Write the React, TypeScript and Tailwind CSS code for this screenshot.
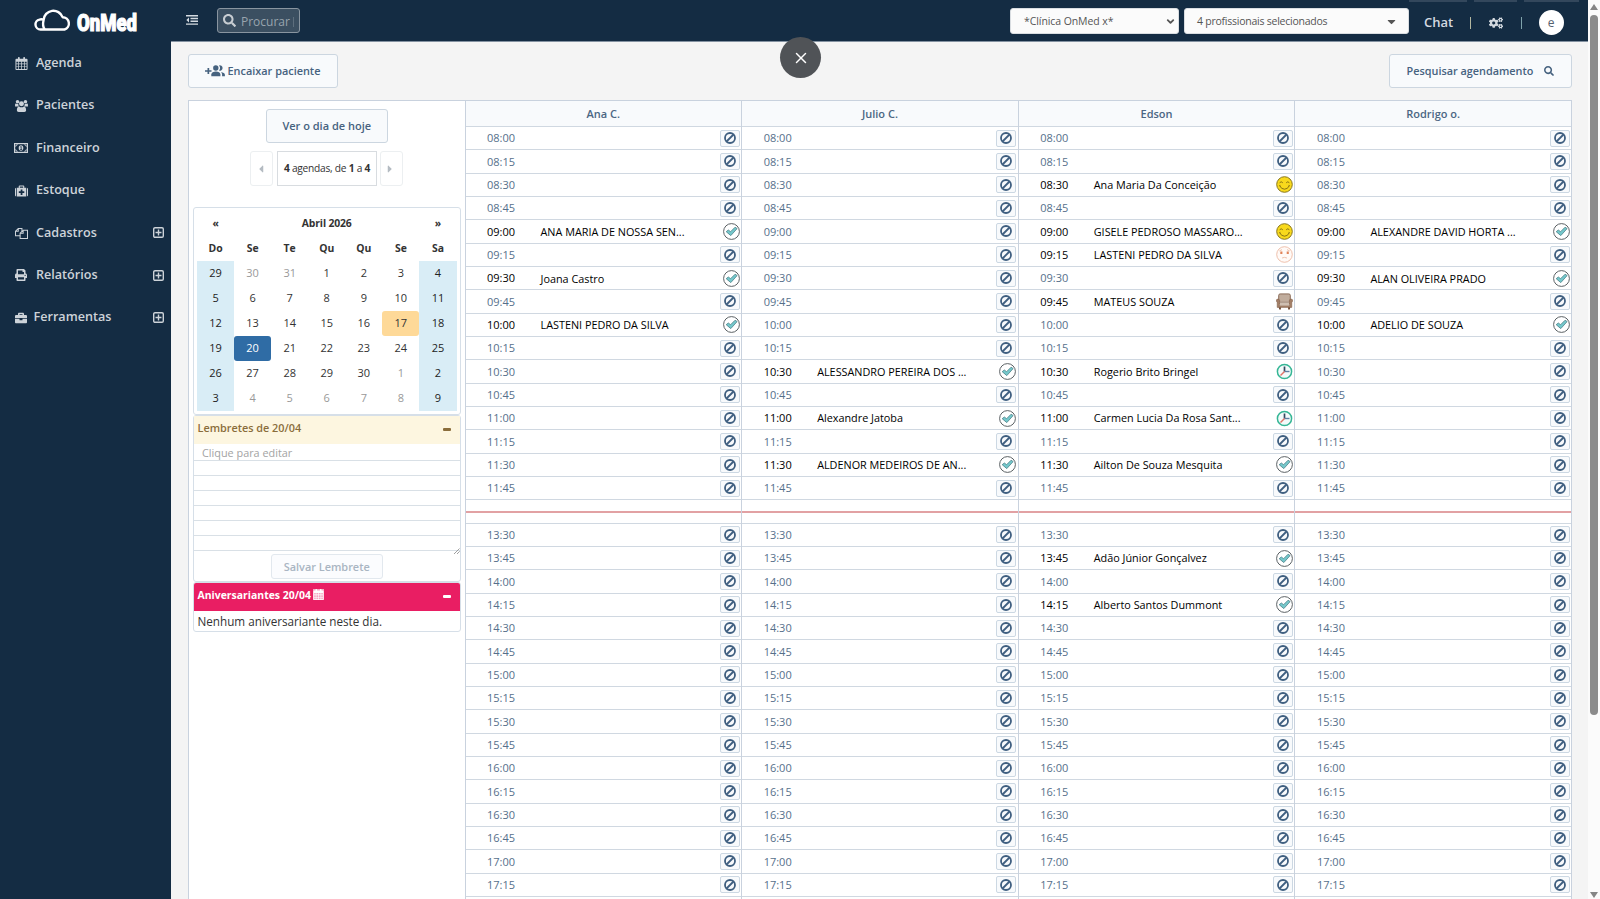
import { ReactNode } from "react"
import { FaPrint, FaBriefcase, FaSearch, FaCogs, FaCaretLeft, FaCaretRight, FaCaretDown } from "react-icons/fa"
import { ChevronDown, X } from "lucide-react"
import clsx from "clsx"

type Status = 'done' | 'happy' | 'sad' | 'chair' | 'clock'

type Booking = {
    name : string;
    status : Status;
}

type Professional = {
    name : string;
    bookings : Record<string, Booking>;
}

const professionals : Professional[] = [
    {
        name: 'Ana C.',
        bookings: {
            '09:00': { name: 'ANA MARIA DE NOSSA SEN...', status: 'done' },
            '09:30': { name: 'Joana Castro', status: 'done' },
            '10:00': { name: 'LASTENI PEDRO DA SILVA', status: 'done' },
        },
    },
    {
        name: 'Julio C.',
        bookings: {
            '10:30': { name: 'ALESSANDRO PEREIRA DOS ...', status: 'done' },
            '11:00': { name: 'Alexandre Jatoba', status: 'done' },
            '11:30': { name: 'ALDENOR MEDEIROS DE AN...', status: 'done' },
        },
    },
    {
        name: 'Edson',
        bookings: {
            '08:30': { name: 'Ana Maria Da Conceição', status: 'happy' },
            '09:00': { name: 'GISELE PEDROSO MASSARO...', status: 'happy' },
            '09:15': { name: 'LASTENI PEDRO DA SILVA', status: 'sad' },
            '09:45': { name: 'MATEUS SOUZA', status: 'chair' },
            '10:30': { name: 'Rogerio Brito Bringel', status: 'clock' },
            '11:00': { name: 'Carmen Lucia Da Rosa Sant...', status: 'clock' },
            '11:30': { name: 'Ailton De Souza Mesquita', status: 'done' },
            '13:45': { name: 'Adão Júnior Gonçalvez', status: 'done' },
            '14:15': { name: 'Alberto Santos Dummont', status: 'done' },
        },
    },
    {
        name: 'Rodrigo o.',
        bookings: {
            '09:00': { name: 'ALEXANDRE DAVID HORTA ...', status: 'done' },
            '09:30': { name: 'ALAN OLIVEIRA PRADO', status: 'done' },
            '10:00': { name: 'ADELIO DE SOUZA', status: 'done' },
        },
    },
]

// quarter-hour slots between two times, in minutes
const slots = (from : number, to : number) => {
    const list : string[] = []
    for (let m = from; m <= to; m += 15) {
        list.push(`${String(Math.floor(m / 60)).padStart(2, '0')}:${String(m % 60).padStart(2, '0')}`)
    }
    return list
}

const morning = slots(8 * 60, 11 * 60 + 45)
const afternoon = slots(13 * 60 + 30, 17 * 60 + 15)

const weeks = [
    [29, 30, 31, 1, 2, 3, 4],
    [5, 6, 7, 8, 9, 10, 11],
    [12, 13, 14, 15, 16, 17, 18],
    [19, 20, 21, 22, 23, 24, 25],
    [26, 27, 28, 29, 30, 1, 2],
    [3, 4, 5, 6, 7, 8, 9],
]

function CalendarIcon({ className } : { className? : string }) {
    return (
        <svg viewBox="0 0 13 14" className={className} fill="currentColor">
            <path fillRule="evenodd" d="M1 2h1.7V1a.8.8 0 0 1 .8-.9h.3a.8.8 0 0 1 .8.9v1h3.8V1a.8.8 0 0 1 .8-.9h.3a.8.8 0 0 1 .8.9v1H12a1 1 0 0 1 1 1v10a1 1 0 0 1-1 1H1a1 1 0 0 1-1-1V3a1 1 0 0 1 1-1zM1 5v2h2V5zm2.8 0v2h2.3V5zm3.1 0v2h2.3V5zM10 5v2h2V5zM1 7.8v2.3h2V7.8zm2.8 0v2.3h2.3V7.8zm3.1 0v2.3h2.3V7.8zm3.1 0v2.3h2V7.8zM1 10.9V13h2v-2.1zm2.8 0V13h2.3v-2.1zm3.1 0V13h2.3v-2.1zm3.1 0V13h2v-2.1z" />
        </svg>
    )
}

function GroupIcon() {
    return (
        <svg viewBox="0 0 14 13" className="w-[13px] h-[12px]" fill="currentColor">
            <circle cx="2.700" cy="2" r="1.900" />
            <circle cx="11.300" cy="2" r="1.900" />
            <circle cx="7" cy="4" r="2.700" />
            <path d="M0 7V5.500c0-1 .4-1.600 1-1.600.5.4 1.500.6 2.600.2A3.600 3.600 0 0 0 4.300 7zM14 7V5.500c0-1-.4-1.600-1-1.600-.5.4-1.500.6-2.600.2A3.600 3.600 0 0 1 9.700 7z" />
            <path d="M2 11.200c0-2.300.6-4.200 2.500-4.200 1.500 1.300 3.500 1.300 5 0 1.900 0 2.500 1.900 2.500 4.200 0 1.100-.8 1.800-1.900 1.800H3.900C2.800 13 2 12.300 2 11.200z" />
        </svg>
    )
}

function MoneyIcon() {
    return (
        <svg viewBox="0 0 14 10" className="w-[14px] h-[10px]">
            <rect x="0.6" y="0.6" width="12.8" height="8.8" fill="none" stroke="currentColor" strokeWidth="1.2" />
            <path d="M1 3.2A2.2 2.2 0 0 0 3.2 1M13 3.2A2.2 2.2 0 0 1 10.8 1M1 6.8A2.2 2.2 0 0 1 3.2 9M13 6.8A2.2 2.2 0 0 0 10.8 9" fill="none" stroke="currentColor" strokeWidth="0.9" />
            <ellipse cx="7" cy="5" rx="2.3" ry="2.8" fill="currentColor" />
            <path d="M6.3 4l.9-.6v3M6.2 6.5h1.9" fill="none" stroke="#142c43" strokeWidth="0.8" />
        </svg>
    )
}

function MedkitIcon() {
    return (
        <svg viewBox="0 0 14 12" className="w-[13px] h-[12px]" fill="currentColor">
            <path fillRule="evenodd" d="M0 4a1.5 1.5 0 0 1 1.2-1.5V12A1.5 1.5 0 0 1 0 10.5zM14 4a1.5 1.5 0 0 0-1.2-1.5V12A1.5 1.5 0 0 0 14 10.5zM2 2.4h2V1a1 1 0 0 1 1-1h4a1 1 0 0 1 1 1v1.4h2V12H2zM5.2 1.2v1.2h3.6V1.2zM6.1 4.3v2H4.1v1.9h2v2h1.9v-2h2V6.3H8v-2z" />
        </svg>
    )
}

function CopyIcon() {
    return (
        <svg viewBox="0 0 14 13" className="w-[13px] h-[12px]" fill="none" stroke="currentColor" strokeWidth="1.1">
            <path d="M5.5 9.5h-5v-5L3.5 1.5h4v3M3.5 1.5v3h-3" />
            <path d="M8.8 3.5h4.7v9h-8V6.7zM8.8 3.5v3.2H5.5" />
        </svg>
    )
}

function OutdentIcon() {
    return (
        <svg viewBox="0 0 12 10" className="w-[12px] h-[10px]" fill="none" stroke="currentColor" strokeWidth="1.4">
            <path d="M0 .8h12M4.5 3.5H12M4.5 6.3H12M0 9.1h12" />
            <path d="M3 2.4v5L.3 4.9z" fill="currentColor" stroke="none" />
        </svg>
    )
}

function AddGroupIcon() {
    return (
        <svg viewBox="0 0 20 12" className="w-[20px] h-[12px] mr-[3px]" fill="currentColor">
            <path d="M2.5 3h1.7v2.2h2.3v1.6H4.2V9H2.5V6.8H0V5.2h2.5z" />
            <circle cx="10.8" cy="3" r="2.7" />
            <path d="M6.3 11.3V9.5c0-1.9 2.2-2.9 4.6-2.9s4.5 1 4.5 2.9v1.8z" />
            <path d="M14 .5a2.7 2.7 0 1 1 0 5.1 3.9 3.9 0 0 0 0-5.1z" />
            <path d="M15.9 7c2.4.4 4 1.4 4 2.8v1.5h-2.8V9.6c0-1.1-.5-1.9-1.2-2.6z" />
        </svg>
    )
}

function PlusBox() {
    return (
        <svg viewBox="0 0 11 11" className="w-[11px] h-[11px] ml-auto" fill="none" stroke="currentColor" strokeWidth="1.4">
            <rect x="0.7" y="0.7" width="9.6" height="9.6" rx="1.3" />
            <path d="M5.5 2.5v6M2.5 5.5h6" />
        </svg>
    )
}

function BanIcon() {
    return (
        <svg viewBox="0 0 12 12" className="w-[12px] h-[12px]" fill="none" stroke="#3f5f80" strokeWidth="1.8">
            <circle cx="6" cy="6" r="5" />
            <path d="M2.5 9.5l7-7" />
        </svg>
    )
}

function StatusIcon({ status } : { status : Status }) {
    return (
        <svg viewBox="0 0 17 17" className="w-[17px] h-[17px]" fill="none">
            {status === 'done' && <>
                <circle cx="8.5" cy="8.5" r="7.9" fill="#fff" stroke="#4a5053" strokeWidth="0.9" />
                <path d="M3.2 8.7l2.1-1.7 2.3 1.7 4.5-4.5 2 1.4-6.3 7z" fill="#74c8cb" stroke="#477f88" strokeWidth="0.8" />
            </>}
            {status === 'happy' && <>
                <circle cx="8.5" cy="8.5" r="7.8" fill="#f8d91c" stroke="#8a781f" />
                <path d="M3.6 6.8q1.6-2 3.2 0M10.2 6.8q1.6-2 3.2 0M3.8 9.7q1.3 3.5 4.7 3.5t4.7-3.5M3.2 9.9l1.2-.5M12.6 9.4l1.2.5" stroke="#6d5a12" strokeWidth="0.8" />
            </>}
            {status === 'sad' && <>
                <circle cx="8.5" cy="8.5" r="7.8" fill="#fffaf7" stroke="#eab198" strokeWidth="0.8" />
                <path d="M4.3 5.6h2.1v2.5H4.3zM10.7 5.6h2.1v2.5h-2.1z" fill="#e08358" />
                <path d="M3.3 5l2.7-1.4M11 3.6l2.7 1.4M6 12q2.5-1.3 5 0" stroke="#e9b59d" strokeWidth="0.8" />
            </>}
            {status === 'chair' && <>
                <path d="M2.7 14h2.2v2.5H3.2zM12.1 14h2.2l-.5 2.5h-1.7z" fill="#6f4a33" />
                <rect x="2.7" y="0.9" width="11.6" height="10" rx="1.5" fill="#c0ac9c" stroke="#80604b" strokeWidth="0.9" />
                <path d="M.3 8a1.500 1.500 0 0 1 3.300-.5V12.500h9.800V7.500a1.500 1.500 0 0 1 3.300.5l-.9 1.500V14.400H1.200V9.500z" fill="#a37f67" stroke="#7d5b45" strokeWidth="0.5" />
                <path d="M3.900 9.200h9.200v3.300H3.900z" fill="#cfbfb1" />
                <path d="M4 9.200h9" stroke="#8f7566" strokeWidth="0.6" />
            </>}
            {status === 'clock' && <>
                <circle cx="8.5" cy="8.5" r="7.1" fill="#f3fafa" stroke="#35b695" strokeWidth="1.5" />
                <path d="M8.5 3.5v5" stroke="#33485f" strokeWidth="1.7" />
                <path d="M8 8.5h5.5" stroke="#5c7fa3" strokeWidth="1.4" />
                <path d="M8.5 8.5l-4 4" stroke="#e07367" strokeWidth="1.4" />
            </>}
        </svg>
    )
}

function NavItem({ icon, label, more, tight } : { icon : ReactNode; label : string; more? : boolean; tight? : boolean }) {
    return (
        <a className="flex items-center h-[42.450px] pl-[14px] pr-[7.500px] text-[12.600px] font-semibold text-[#cdd3d9]">
            <span className={clsx('flex items-center justify-center w-[14px] shrink-0', tight ? 'mr-[5.500px]' : 'mr-[8px]')}>{icon}</span>
            {label}
            {more && <PlusBox />}
        </a>
    )
}

function Sidebar() {
    return (
        <aside className="w-[171px] shrink-0 h-full bg-[#142c43]">
            <div className="flex h-[42px] pl-[34px] pt-[8px]">
                <svg viewBox="0 0 39 25" className="w-[39px] h-[25px] shrink-0">
                    <path d="M11 21.5H6.5A5 5 0 0 1 5.5 11.6 5 5 0 0 1 9.6 12 9.8 9.8 0 0 1 28.6 9.2 6.3 6.3 0 0 1 30.5 21.5H11Q8 18.5 9.6 12" fill="none" stroke="#fff" strokeWidth="2.4" strokeLinejoin="round" />
                </svg>
                <svg viewBox="0 0 66 33" className="w-[66px] h-[33px] shrink-0 overflow-visible">
                    <text x="4" y="22.500" textLength="60" lengthAdjust="spacingAndGlyphs" fill="#fff" stroke="#fff" strokeWidth="1.200" className="font-['Roboto',sans-serif] text-[24px] font-black">OnMed</text>
                </svg>
            </div>
            <nav>
                <NavItem icon={<CalendarIcon className="w-[13px] h-[13px]" />} label="Agenda" />
                <NavItem icon={<GroupIcon />} label="Pacientes" />
                <NavItem icon={<MoneyIcon />} label="Financeiro" />
                <NavItem icon={<MedkitIcon />} label="Estoque" />
                <NavItem icon={<CopyIcon />} label="Cadastros" more />
                <NavItem icon={<FaPrint size={12} />} label="Relatórios" more />
                <NavItem icon={<FaBriefcase size={12} />} label="Ferramentas" more tight />
            </nav>
        </aside>
    )
}

function Header() {
    return (
        <header className="relative flex items-start h-[42px] shrink-0 bg-[#142c43] border-b border-[#8492a1] text-[#d4dae0]">
            <div className="absolute top-0 right-[9px] flex gap-[7px]">
                <span className="w-[58px] h-[2px] bg-[#33475c]" />
                <span className="w-[43px] h-[2px] bg-[#33475c]" />
                <span className="w-[55px] h-[2px] bg-[#33475c]" />
            </div>
            <div className="ml-[15px] mt-[15px]"><OutdentIcon /></div>
            <div className="flex items-center w-[83px] h-[25px] mt-[8px] ml-[19px] pl-[5px] bg-[#3b4f61] border border-[#8995a0] rounded-[3px]">
                <FaSearch size={13} className="shrink-0 text-[#c8cdd2]" />
                <span className="ml-[5px] pt-[2px] whitespace-nowrap text-[12px] leading-[18px] text-[#98a4ae]">Procurar</span>
                <span className="w-px h-[10px] ml-[3px] mt-[2px] bg-[#5d6e7d]" />
            </div>
            <div className="flex mt-[8px] ml-auto text-[#555]">
                <div className="flex items-center justify-between w-[169px] h-[26px] pl-[13px] pr-[2px] bg-[#fbfbfb] border border-[#d9dde1] rounded-[3px] text-[10.500px] tracking-[-0.080px]">
                    <span className="pt-[2px]">*Clínica OnMed x*</span>
                    <ChevronDown size={11} strokeWidth={4} />
                </div>
                <div className="flex items-center justify-between w-[225px] h-[26px] ml-[5px] pl-[12px] pr-[10px] bg-[#fbfbfb] border border-[#d9dde1] rounded-[3px] text-[10.500px] tracking-[-0.240px]">
                    <span className="pt-[2px]">4 profissionais selecionados</span>
                    <FaCaretDown size={13} />
                </div>
            </div>
            <div className="flex items-center h-[25px] mt-[10px] w-[179px] pl-[15px]">
                <span className="w-[46px] pt-px text-[13px] font-semibold">Chat</span>
                <span className="w-px h-[12px] bg-[#b4b7a0]" />
                <FaCogs size={14} className="ml-[17.500px]" />
                <span className="w-px h-[12px] ml-[18px] bg-[#7fa3ab]" />
                <span className="flex items-center justify-center w-[25px] h-[25px] ml-[17px] rounded-full bg-white text-[12px] text-[#55626f]">e</span>
            </div>
        </header>
    )
}

function MiniCalendar() {
    return (
        <div className="h-[208px] mt-[21px] px-[3px] pt-[3px] bg-white border border-[#d6dfe8] rounded-[3px] text-[11px] text-[#333]">
            <div className="grid grid-cols-7 h-[25px] items-center text-center text-[10.400px] tracking-[-0.150px] font-bold">
                <span>«</span>
                <span className="col-span-5">Abril 2026</span>
                <span>»</span>
            </div>
            <div className="grid grid-cols-7 h-[25px] items-center text-center text-[10.400px] font-bold">
                {['Do', 'Se', 'Te', 'Qu', 'Qu', 'Se', 'Sa'].map((d, i) => <span key={i}>{d}</span>)}
            </div>
            {weeks.map((week, w) => (
                <div key={w} className="grid grid-cols-7 h-[25px]">
                    {week.map((day, i) => {
                        const weekend = i === 0 || i === 6
                        const outside = (w === 0 && day > 7) || (w > 3 && day < 20)
                        const selected = w === 3 && day === 20
                        const today = w === 2 && day === 17
                        return (
                            <span
                                key={i}
                                className={clsx(
                                    'flex items-center justify-center',
                                    weekend && 'bg-[#d9edf6] text-[#222]',
                                    !weekend && outside && 'text-[#999]',
                                    selected && 'bg-[#2f6ca5] text-white rounded-[3px]',
                                    today && 'bg-[#fed998] rounded-[3px]',
                                )}
                            >
                                {day}
                            </span>
                        )
                    })}
                </div>
            ))}
        </div>
    )
}

function LeftPanel() {
    return (
        <div className="w-[276px] shrink-0 pl-[4.500px] pr-[4px] pt-[8px] bg-white">
            <div className="flex justify-center">
                <button className="w-[122px] h-[34px] bg-[#f8fafc] border border-[#ccd6e0] rounded-[3px] text-[11px] font-semibold text-[#46627f]">Ver o dia de hoje</button>
            </div>
            <div className="flex justify-center mt-[8px] h-[35px] pr-px text-[10px] text-[#333]">
                <span className="flex items-center justify-center w-[23px] border border-[#eceff1] rounded-[3px] pr-[2px] text-[#b4bbc2]"><FaCaretLeft size={12} /></span>
                <span className="flex items-center justify-center w-[100px] ml-[4px] mr-[2.500px] border border-[#d8dce0] whitespace-pre text-[10.200px] tracking-[-0.250px]"><b>4</b> agendas, de <b>1</b> a <b>4</b></span>
                <span className="flex items-center justify-center w-[23px] border border-[#eceff1] rounded-[3px] pr-[3px] text-[#b4bbc2]"><FaCaretRight size={12} /></span>
            </div>
            <MiniCalendar />
            <div className="h-[167px] border border-[#d6dfe8] rounded-[3px]">
                <div className="flex items-start justify-between h-[28px] pt-[4px] pl-[3.500px] pr-[9px] bg-[#fdf6e0] text-[10.850px] font-semibold text-[#8a6d3b]">
                    Lembretes de 20/04
                    <span className="w-[8px] h-[3px] mt-[8px] rounded-[1px] bg-[#8a6d3b]" />
                </div>
                <div className="relative">
                    <div className="h-[17px] pl-[8px] border-b border-[#d9e0e6] text-[10.850px] leading-[17px] text-[#a3a3a3]">Clique para editar</div>
                    {[1, 2, 3, 4, 5, 6].map(n => <div key={n} className="h-[15px] border-b border-[#d9e0e6]" />)}
                    <svg viewBox="0 0 6 6" className="absolute right-0 -bottom-[3px] w-[6px] h-[6px]" stroke="#777" strokeWidth="0.7"><path d="M0 6l5.5-5.5M3 6l2.7-2.7" /></svg>
                </div>
                <div className="flex justify-center pt-[3px]">
                    <button className="w-[112px] h-[25px] pt-px bg-[#fbfcfe] border border-[#e2e8ee] rounded-[3px] text-[10.900px] font-semibold text-[#a9b5c2]">Salvar Lembrete</button>
                </div>
            </div>
            <div className="h-[50px] border border-[#d6dfe8] rounded-[3px] overflow-hidden">
                <div className="flex items-start h-[28px] pt-[5px] pl-[3.500px] pr-[9px] bg-[#e91e63] text-[10.450px] font-bold text-white">
                    Aniversariantes 20/04
                    <CalendarIcon className="w-[11px] h-[11px] mt-px ml-[2px] bg-white/60" />
                    <span className="w-[8px] h-[3px] mt-[7px] ml-auto rounded-[1px] bg-white" />
                </div>
                <div className="pl-[3.500px] text-[11.700px] leading-[21px] text-[#333]">Nenhum aniversariante neste dia.</div>
            </div>
        </div>
    )
}

function Slot({ time, booking } : { time : string; booking? : Booking }) {
    return (
        <div className="flex items-center h-[23.330px] pl-[21.500px] pr-[1.500px] border-b border-[#d0d8e1] text-[11px]">
            <span className={clsx('w-[53.500px] pt-px', booking ? 'text-black' : 'text-[#56708b]')}>{time}</span>
            {booking && <span className="pt-px whitespace-nowrap text-[10.830px] text-black">{booking.name}</span>}
            <span className="flex ml-auto">
                {booking
                    ? <StatusIcon status={booking.status} />
                    : <span className="flex items-center justify-center w-[20px] h-[17px] bg-[#f8fafc] border border-[#ccd8e3] rounded-[2px]"><BanIcon /></span>}
            </span>
        </div>
    )
}

function AgendaColumn({ professional } : { professional : Professional }) {
    return (
        <div className="border-l border-[#c9d2de] min-w-0">
            <div className="flex items-center justify-center h-[26px] pt-px bg-[#f8fafc] border-b border-[#d0d8e1] text-[11px] font-semibold text-[#4b6683]">{professional.name}</div>
            {morning.map(time => <Slot key={time} time={time} booking={professional.bookings[time]} />)}
            {/* lunch break */}
            <div className="h-[23.330px] pt-[11px] border-b border-[#d0d8e1]">
                <div className="h-[2px] bg-[#e2a1a3]" />
            </div>
            {afternoon.map(time => <Slot key={time} time={time} booking={professional.bookings[time]} />)}
            <div className="h-[24px]" />
        </div>
    )
}

function Scrollbar() {
    return (
        <div className="flex flex-col items-center w-[12px] shrink-0 h-full pt-[4px] pb-[1px] bg-[#fbfbfb]">
            <svg viewBox="0 0 8 6" className="w-[8px] h-[6px]" fill="#858585"><path d="M4 0l4 6H0z" /></svg>
            <div className="w-[8px] h-[700px] mt-[5px] rounded-full bg-[#8b8b8b]" />
            <svg viewBox="0 0 8 6" className="w-[8px] h-[6px] mt-auto" fill="#858585"><path d="M4 6l4-6H0z" /></svg>
        </div>
    )
}

export default function App() {
    return (
        <div className="relative flex w-[1600px] h-[899px] overflow-hidden bg-[#f4f4f4] font-['Open_Sans',sans-serif]">
            <Sidebar />
            <div className="flex flex-col flex-1 min-w-0 h-full overflow-hidden">
                <Header />
                <main className="flex flex-col flex-1 min-h-0 pl-[16.500px] pr-[16px] pt-[12px]">
                    <div className="flex justify-between shrink-0">
                        <button className="flex items-center justify-center w-[150px] h-[34px] bg-[#f8fafc] border border-[#ccd6e0] rounded-[3px] text-[10.900px] font-semibold text-[#46627f]">
                            <AddGroupIcon />
                            Encaixar paciente
                        </button>
                        <button className="flex items-center justify-center w-[183px] h-[34px] bg-[#f8fafc] border border-[#ccd6e0] rounded-[3px] text-[10.850px] font-semibold text-[#46627f]">
                            Pesquisar agendamento
                            <FaSearch size={10} className="ml-[11px]" />
                        </button>
                    </div>
                    <div className="flex items-stretch shrink-0 mt-[12px] border border-[#c9d2de]">
                        <LeftPanel />
                        <div className="grid grid-cols-4 flex-1 min-w-0 bg-white">
                            {professionals.map(p => <AgendaColumn key={p.name} professional={p} />)}
                        </div>
                    </div>
                </main>
            </div>
            <Scrollbar />
            <button className="absolute left-[780px] top-[37px] flex items-center justify-center w-[41px] h-[41px] rounded-full bg-[#505357] text-white">
                <X size={18} strokeWidth={2} />
            </button>
        </div>
    )
}
